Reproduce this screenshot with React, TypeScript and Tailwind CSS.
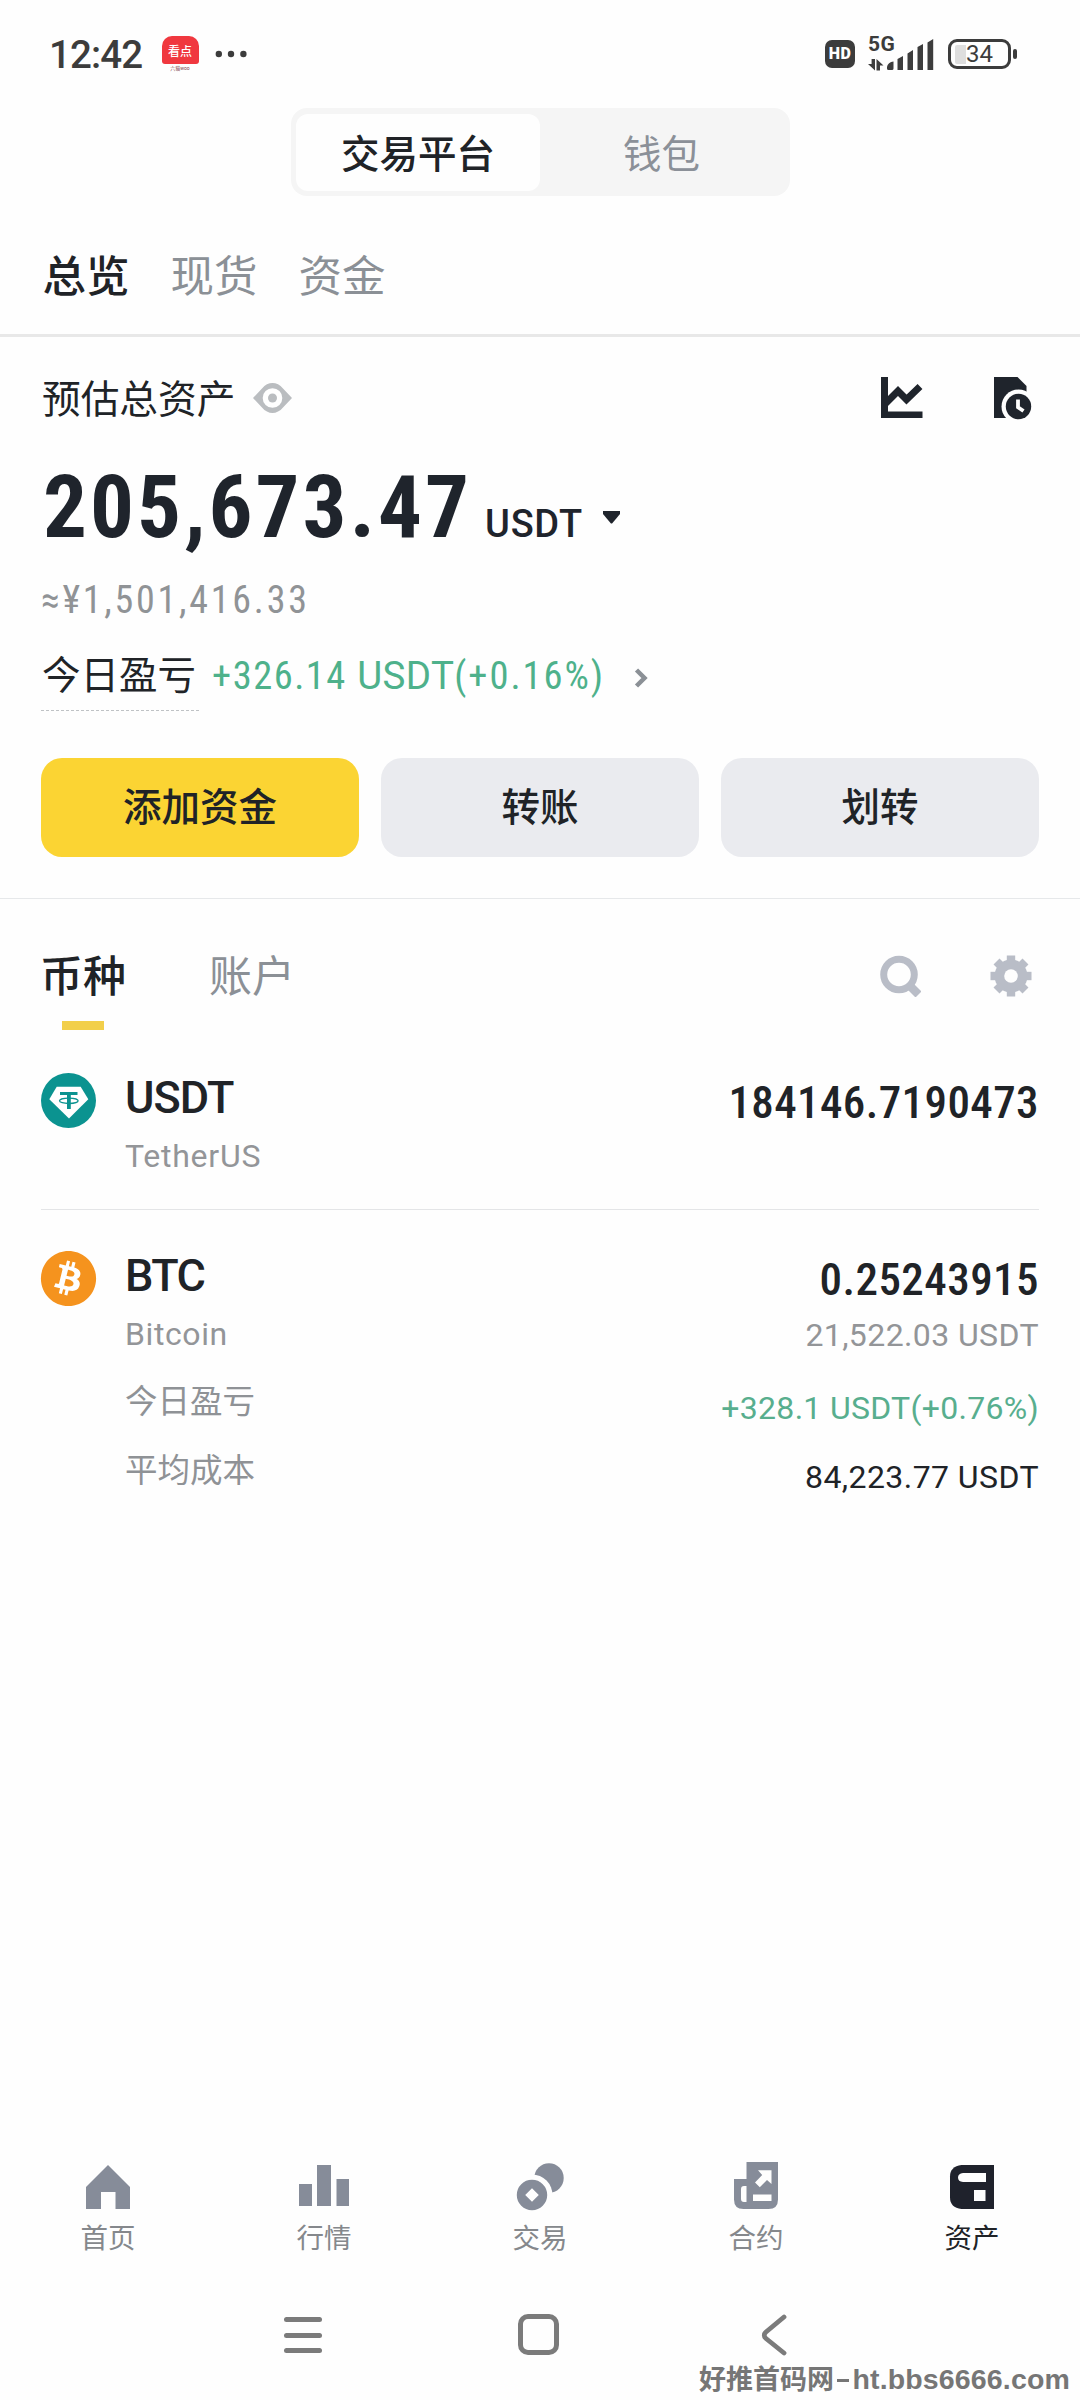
import React from "react";
import { FaBitcoin } from "react-icons/fa";

function StatusBar() {
  return (
    <div className="flex h-[108px] items-start pr-[63px] pl-[49px] text-[#3c3c3c]">
      <div className="mt-[35px] h-[40px] w-[94px] text-[38.5px] leading-[40px] font-medium tracking-[-0.9px]">12:42</div>
      <div className="mt-[36px] ml-[18px] flex h-[38px] w-[38px] flex-col items-center">
        <div className="flex h-[28px] w-[37px] items-center justify-center rounded-t-[10px] rounded-b-[3px] bg-[#f0383f] pt-[3px] text-[12px] leading-none font-medium text-white">
          看点
        </div>
        <div className="h-[8px] pt-[2px] text-[5px] leading-[5px] text-[#80454a]">六猫woo</div>
      </div>
      <svg className="mt-[50px] ml-[16px]" width="32" height="8" viewBox="0 0 32 8" fill="currentColor">
        <circle cx="3.8" cy="4" r="3.2" />
        <circle cx="16" cy="4" r="3.2" />
        <circle cx="28.4" cy="4" r="3.2" />
      </svg>
      <div className="mt-[40px] ml-auto flex h-[28px] w-[30px] items-center justify-center rounded-[7px] bg-[#3c3c3c] text-[16px] leading-none font-black tracking-[0.4px] text-white">
        HD
      </div>
      <div className="mt-[35px] ml-[13px] flex h-[36px] w-[67px]">
        <div className="flex w-[19px] flex-col">
          <div className="h-[19px] w-[30px] text-[21px] leading-[19px] font-bold tracking-[0.4px]">5G</div>
          <svg className="mt-[5px]" width="16" height="12" viewBox="0 0 16 12" fill="currentColor">
            <path d="M0 5h3.6V0H7v11.500z M8.500 0 15.500 6.500H12V11.500H8.500z" />
          </svg>
        </div>
        <svg className="mt-[4px]" width="48" height="31" viewBox="0 0 48 31" fill="currentColor">
          <path d="M0 28a7 6 0 0 1 6.500-5.500V29.500a1.500 1.500 0 0 1-1.500 1.500H1.500a1.500 1.500 0 0 1-1.500-1.500z" />
          <path d="M10.500 20 16 17V31H10.500z M20.500 14.500 26 11V31H20.500z M30.500 8 36 5V31H30.500z M40.500 3.500 46.200 0V31H40.500z" />
        </svg>
      </div>
      <div className="mt-[39px] ml-[13px] flex h-[30px] w-[63px] items-center rounded-[9px] border-[3px] border-[#3c3c3c]">
        <div className="ml-[4px] h-[19px] w-[11px] rounded-l-[2px] bg-[#dedede]" />
        <div className="text-[24px] leading-[24px]">34</div>
      </div>
      <div className="mt-[49px] ml-[2px] h-[10px] w-[4px] rounded-[2px] bg-[#3c3c3c]" />
    </div>
  );
}

function Segment() {
  return (
    <div className="ml-[291px] flex h-[88px] w-[499px] items-center rounded-[16px] bg-[#f5f5f5] pl-[5px] text-[38.5px] font-medium">
      <div className="flex h-[77px] w-[244px] items-center justify-center rounded-[12px] bg-[#fefefe] pt-[5px]">交易平台</div>
      <div className="flex-1 pt-[5px] pr-[7px] text-center font-normal text-[#8b9098]">钱包</div>
    </div>
  );
}

function EyeIcon() {
  return (
    <svg className="-mt-[3px] ml-[18px]" width="39" height="30" viewBox="0 0 39 30">
      <path d="M0 15 9 5.500C15-1.800 24-1.800 30 5.500L39 15 30 24.500C24 31.800 15 31.800 9 24.500Z" fill="#babdc0" />
      <circle cx="19.500" cy="15" r="9.800" fill="#fff" />
      <circle cx="19.500" cy="15" r="4.500" fill="#babdc0" />
    </svg>
  );
}

function ChartIcon() {
  return (
    <svg width="42" height="41" viewBox="0 0 42 41">
      <path d="M0 0H7V34.500H41.500V41H0Z" fill="#1f242c" />
      <path d="M4.500 26.500 17 14 25.500 22.500 39 9.500" fill="none" stroke="#1f242c" strokeWidth="7" />
    </svg>
  );
}

function HistoryIcon() {
  return (
    <svg width="38" height="43" viewBox="0 0 38 43">
      <path d="M0 0H23.500L32.500 9V41H0Z" fill="#1f242c" />
      <circle cx="24.500" cy="29.500" r="17" fill="#fefefe" />
      <circle cx="24.500" cy="29.500" r="12.700" fill="#1f242c" />
      <path d="M24 22.500V30.200L29.500 34" fill="none" stroke="#fefefe" strokeWidth="3.800" />
    </svg>
  );
}

function Overview() {
  return (
    <section className="px-[41px] pt-[42px]">
      <div className="flex h-[40px] items-center text-[38.700px] leading-[40px]">
        <span className="pt-[2px] pl-[1px]">预估总资产</span>
        <EyeIcon />
        <div className="-mt-[2px] mr-[7px] ml-auto flex gap-[71px]">
          <ChartIcon />
          <HistoryIcon />
        </div>
      </div>
      <div className="mt-[38px] flex h-[100px] items-baseline pl-[2px] text-[#1f242c]">
        <span className="font-stretch-condensed text-[87px] leading-[100px] font-bold tracking-[3.080px]">205,673.47</span>
        <span className="ml-[13px] text-[38px] font-medium tracking-[0.680px]">USDT</span>
        <svg className="mt-[54px] ml-[20px] self-start" width="17" height="13" viewBox="0 0 17 13">
          <path d="M0 0H17V3L9.500 12Q8.500 13 7.500 12L0 3Z" fill="#1f242c" />
        </svg>
      </div>
      <div className="font-stretch-condensed mt-[23px] h-[40px] text-[38px] leading-[40px] tracking-[2.750px] text-[#909396]">
        ≈¥1,501,416.33
      </div>
      <div className="mt-[35px] flex h-[56px] text-[38.500px] leading-[40px]">
        <div className="h-[56px] w-[158px] border-b border-dashed border-[#bfc2c5] pt-px pl-[1px] whitespace-nowrap">今日盈亏</div>
        <div className="ml-[13px] pt-px whitespace-pre text-[#4eb18b]">
          <span className="font-stretch-condensed tracking-[1.500px]">+326.14 </span>
          <span className="tracking-[0.400px]">USDT</span>
          <span className="font-stretch-condensed tracking-[1.950px]">(+0.16%)</span>
        </div>
        <svg className="mt-[13px] ml-auto mr-[390px]" width="15" height="20" viewBox="0 0 15 20">
          <path d="M2.500 2 10.500 10 2.500 18" fill="none" stroke="#8b9096" strokeWidth="4.500" />
        </svg>
      </div>
      <div className="mt-[47px] flex gap-[22px] text-[38.500px] font-medium">
        <div className="flex h-[99px] flex-1 items-center justify-center rounded-[21px] bg-[#fbd433] pt-px">添加资金</div>
        <div className="flex h-[99px] flex-1 items-center justify-center rounded-[21px] bg-[#eaebef] pt-px">转账</div>
        <div className="flex h-[99px] flex-1 items-center justify-center rounded-[21px] bg-[#eaebef] pt-px">划转</div>
      </div>
    </section>
  );
}

const TEETH = [0, 45, 90, 135, 180, 225, 270, 315];

function AssetTabs() {
  return (
    <div className="px-[41px] pt-[56px]">
      <div className="flex h-[42px] items-center text-[43px] leading-[42px]">
        <span className="-ml-px pt-[2px] font-medium">币种</span>
        <span className="ml-[83px] pt-[2px] text-[#8b9096]">账户</span>
        <svg className="ml-auto" width="42" height="42" viewBox="0 0 42 42" fill="none" stroke="#b9bdc7">
          <circle cx="20" cy="19.500" r="15.300" strokeWidth="7" />
          <path d="M30 30 39.500 39.500" strokeWidth="8.500" />
        </svg>
        <svg className="mr-[7px] ml-[69px]" width="42" height="42" viewBox="0 0 42 42">
          <g fill="#b9bdc7">
            <circle cx="21" cy="21" r="16.500" />
            {TEETH.map((a) => (
              <path key={a} d="M16.800 0.500H25.200V8H16.800Z" transform={`rotate(${a} 21 21)`} />
            ))}
          </g>
          <circle cx="21" cy="21" r="6.800" fill="#fefefe" />
        </svg>
      </div>
      <div className="mt-[24px] ml-[21px] h-[9px] w-[42px] bg-[#f2cf4a]" />
    </div>
  );
}

function TetherIcon() {
  return (
    <svg width="55" height="55" viewBox="0 0 55 55">
      <circle cx="27.500" cy="27.500" r="27.500" fill="#0b9390" />
      <path d="M15.700 13.800H39.700L47.300 26.200 28 45.500 8.300 26.200Z" fill="#fff" />
      <path d="M19 19H36.500V22H29.800V36H26V22H19Z" fill="#0b9390" />
      <ellipse cx="27.800" cy="27.800" rx="9.300" ry="2.700" fill="none" stroke="#0b9390" strokeWidth="1.300" />
    </svg>
  );
}

function AssetList() {
  return (
    <div className="px-[41px]">
      <div className="mt-[43px] flex">
        <TetherIcon />
        <div className="ml-[29px]">
          <div className="h-[48px] pt-px text-[45px] leading-[48px] font-medium tracking-[-1px]">USDT</div>
          <div className="mt-[15px] h-[40px] text-[32px] leading-[40px] tracking-[0.750px] text-[#939598]">TetherUS</div>
        </div>
        <div className="font-stretch-condensed ml-auto h-[57px] pt-px text-[45px] leading-[57px] font-medium tracking-[0.400px]">
          184146.7190473
        </div>
      </div>
      <div className="mt-[33px] h-px bg-[#e4e5e7]" />
      <div className="mt-[41px] flex">
        <FaBitcoin className="-m-px h-[57px] w-[57px] text-[#f5931e]" />
        <div className="ml-[29px]">
          <div className="h-[48px] pt-px text-[45px] leading-[48px] font-medium tracking-[-1.500px]">BTC</div>
          <div className="mt-[15px] h-[40px] text-[32px] leading-[40px] tracking-[0.600px] text-[#939598]">Bitcoin</div>
          <div className="mt-[27px] h-[40px] pt-px text-[32.500px] leading-[40px] text-[#8f9296]">今日盈亏</div>
          <div className="mt-[30px] h-[40px] text-[32.500px] leading-[40px] text-[#8f9296]">平均成本</div>
        </div>
        <div className="ml-auto flex flex-col items-end text-[32px] leading-[40px]">
          <div className="font-stretch-condensed h-[55px] pt-px text-[45px] leading-[55px] font-medium tracking-[0.440px]">0.25243915</div>
          <div className="mt-[9px] h-[40px] tracking-[0.400px] text-[#939598]">21,522.03 USDT</div>
          <div className="mt-[33px] h-[39px] tracking-[0.300px] text-[#58ae8e]">+328.1 USDT(+0.76%)</div>
          <div className="mt-[30px] h-[40px] tracking-[0.430px]">84,223.77 USDT</div>
        </div>
      </div>
    </div>
  );
}

function NavItem({ label, active, children }: { label: string; active?: boolean; children: React.ReactNode }) {
  return (
    <div className={active ? "flex flex-1 flex-col items-center text-[#1f222c]" : "flex flex-1 flex-col items-center text-[#868c99]"}>
      <svg width="52" height="52" viewBox="0 0 52 52" fill="currentColor">
        {children}
      </svg>
      <div className={active ? "mt-[10px] h-[34px] text-[27.500px] leading-[34px] text-[#202327]" : "mt-[10px] h-[34px] text-[27.500px] leading-[34px] text-[#85888c]"}>
        {label}
      </div>
    </div>
  );
}

function BottomNav() {
  return (
    <div className="mt-auto flex">
      <NavItem label="首页">
        <path d="M26 5 48 27V49H33.500V32H19V49H4V27Z" />
      </NavItem>
      <NavItem label="行情">
        <path d="M1 24H14V46H1ZM19 5H33V46H19ZM38.500 19H51V46H38.500Z" />
      </NavItem>
      <NavItem label="交易">
        <circle cx="35" cy="18" r="14.700" />
        <circle cx="18" cy="35" r="20.500" fill="#fefefe" />
        <path fillRule="evenodd" d="M18 19.800a15.200 15.200 0 1 0 0 30.400a15.200 15.200 0 1 0 0-30.400ZM18 28.200 24.800 35 18 41.800 11.200 35Z" />
      </NavItem>
      <NavItem label="合约">
        <path d="M16.500 2H48V39.500Q48 49 38.500 49H13.500Q4 49 4 39.500V19H16.500Z" />
        <path fill="#fefefe" d="M16.500 26H14Q11 26 11 29V39Q11 42 14 42H16.500ZM23 34.500H41.500V41H23ZM28 10.200H41.500V24L37 20 29.800 27.200 25 22.400 32.200 15Z" />
      </NavItem>
      <NavItem label="资产" active>
        <path d="M15.500 5H48V49H15.500Q4 47.500 4 37.500V16.500Q4 6.500 15.500 5Z" />
        <path fill="#fefefe" d="M40 13V22H17Q12 21.500 12 17.500T17 13ZM28 30H39.500V41H28Z" />
      </NavItem>
    </div>
  );
}

function SystemNav() {
  return (
    <div className="mt-[58px] flex h-[42px] items-center pl-[284px]">
      <div className="flex w-[38px] flex-col gap-[10.500px]">
        <div className="h-[5px] rounded-full bg-[#7b7b7b]" />
        <div className="h-[5px] rounded-full bg-[#7b7b7b]" />
        <div className="h-[5px] rounded-full bg-[#7b7b7b]" />
      </div>
      <div className="-mt-px ml-[196px] h-[41px] w-[41px] rounded-[10px] border-[5px] border-[#7b7b7b]" />
      <svg className="ml-[202px]" width="26" height="42" viewBox="0 0 26 42">
        <path d="M23 3 5 18Q1.500 21.300 5 24.500L23 39" fill="none" stroke="#7b7b7b" strokeWidth="4.800" strokeLinecap="round" />
      </svg>
    </div>
  );
}

export default function App() {
  return (
    <div className="flex h-[2400px] w-[1080px] flex-col overflow-hidden bg-[#fefefe] font-['Roboto','Noto_Sans_CJK_SC',sans-serif] text-[#202327]">
      <StatusBar />
      <Segment />
      <div className="mt-[62px] flex h-[40px] gap-[41px] pl-[42.500px] text-[43.500px] leading-[40px] text-[#8b9096]">
        <span className="font-medium text-[#202327]">总览</span>
        <span>现货</span>
        <span>资金</span>
      </div>
      <div className="mt-[36px] h-[3px] shrink-0 bg-[#e8e8e8]" />
      <Overview />
      <div className="mt-[41px] h-px shrink-0 bg-[#e6e8ea]" />
      <AssetTabs />
      <AssetList />
      <BottomNav />
      <SystemNav />
      <div className="mt-[3px] flex h-[41px] shrink-0 items-center pr-[10px] pl-[699px] font-['Liberation_Sans','Noto_Sans_CJK_SC',sans-serif] font-bold whitespace-nowrap text-[#767676]">
        <span className="pt-px text-[27px]">好推首码网</span>
        <span className="mt-px ml-[3px] h-[3px] w-[14px] bg-[#767676]" />
        <span className="ml-[3px] text-[28.500px] tracking-[0.150px]">ht.bbs6666.com</span>
      </div>
    </div>
  );
}
